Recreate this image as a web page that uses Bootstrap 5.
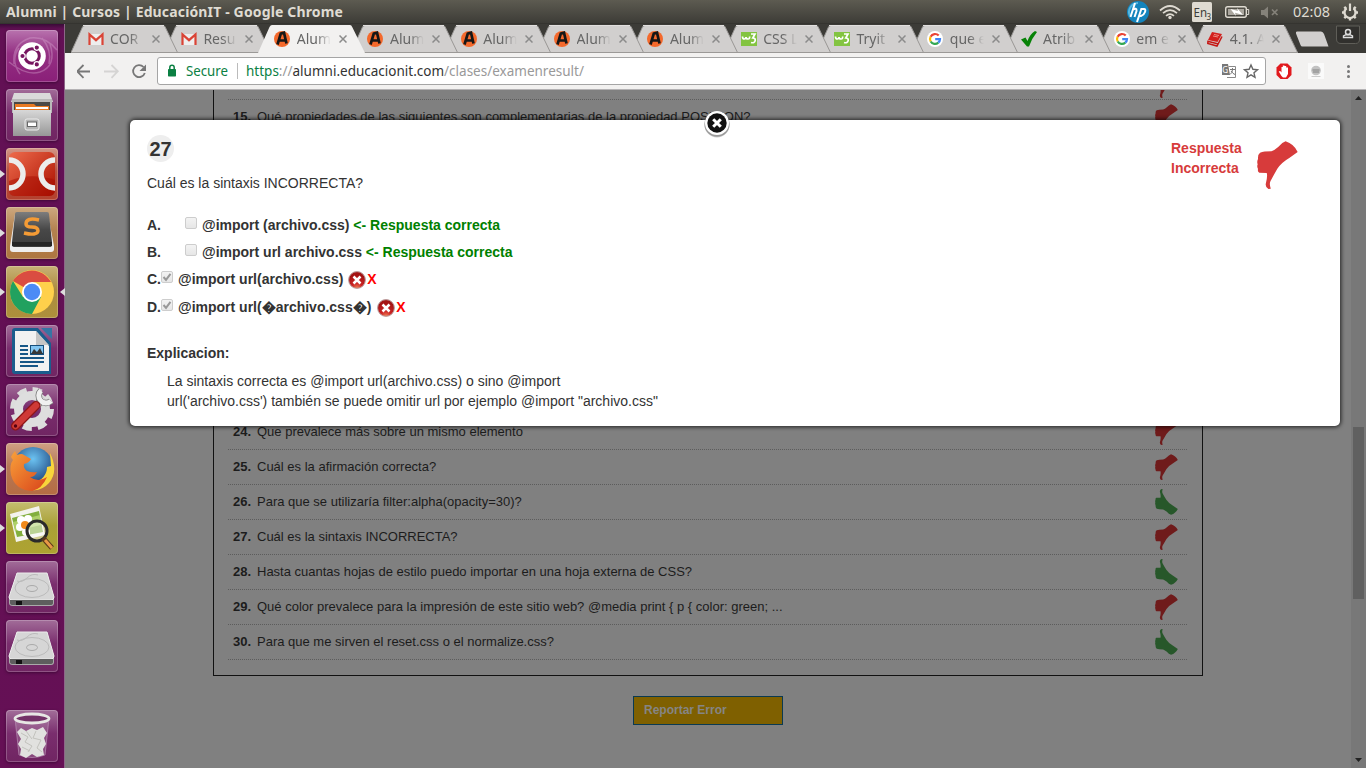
<!DOCTYPE html>
<html lang="es">
<head>
<meta charset="utf-8">
<title>Alumni | Cursos | EducaciónIT</title>
<link href="https://cdn.jsdelivr.net/npm/bootstrap@5.3.0/dist/css/bootstrap.min.css" rel="stylesheet">
<style>
body{width:1366px;height:768px;overflow:hidden;font-family:"Liberation Sans",Arial,sans-serif;color:#333;background:#808080}
svg{display:block;flex:none}
.ui-font{font-family:"Noto Sans","Open Sans",sans-serif}
.top-panel{height:24px;background:linear-gradient(#5d5b51,#3d3c37 96%,#2c2b28);color:#dfdbd2}
.panel-title{font-size:14px;font-weight:700;padding-left:6px;line-height:24px;letter-spacing:.145px}
.tray{position:relative;width:240px;height:24px}
.launcher{width:65px;height:744px;padding:6px 0 0 6px;background:linear-gradient(#3a0b38 0,#621054 5px,#651055 100%);border-right:1px solid #8d6688;gap:7px}
.tile{position:relative;width:52px;height:52px;flex:none;border-radius:4px;background:linear-gradient(#a26d99,#7a2e6e 45%,#702562);box-shadow:inset 0 0 0 1px rgba(255,255,255,.22),0 1px 3px rgba(30,0,30,.5)}
.tile.run::before{content:"";position:absolute;left:-6px;top:22px;border:4px solid transparent;border-left:5px solid #ddd;border-right:0}
.tile.front::after{content:"";position:absolute;right:-7px;top:22px;border:4px solid transparent;border-right:5px solid #ddd;border-left:0}
.tab-strip{height:29px;background:#3c3b37;padding-left:6px;position:relative}
.b-tab{position:relative;width:93.3px;height:29px;flex:none;color:#666}
.tab-shape{position:absolute;left:0;top:0}
.tab-body{position:relative;padding:7px 0 0 16.6px;height:29px}
.tab-text{width:35px;margin:0 -1px 0 6.5px;font-size:14px;line-height:16px;white-space:nowrap;-webkit-mask-image:linear-gradient(90deg,#000 55%,transparent 97%);mask-image:linear-gradient(90deg,#000 55%,transparent 97%)}
.tool-bar{height:37px;background:#f2f1f0;border-bottom:1px solid #b4b2b4;padding:4px 0 0 12px}
.omni{width:1109px;height:28px;border:1px solid #a5a5a5;border-radius:3px;background:#fff;font-size:14px;line-height:26px}
.page{position:relative;height:678px;background:#808080;overflow:hidden}
.results{width:990px;height:606px;margin-left:148px;margin-top:-20px;border:1px solid #111;padding:0 15px 0 14px;font-size:13px;color:#1c1c1c}
.q-row{height:35px;border-bottom:1px dotted #5c5c5c;padding:0 9px 0 5px}
.q-row b{width:24px}
.q-gap{height:280px}
.report{width:150px;height:29px;margin:20px 0 0 568px;background:#7f6000;border:1px solid #0a3a52;color:#858585;font-size:12px;font-weight:700;line-height:27px;padding-left:10px}
.scroll-bar{position:absolute;right:0;top:0;width:15px;height:678px;background:#787878}
.thumb{width:11px;height:172px;background:#606060}
.dialog-box{position:absolute;left:65px;top:30px;width:1210px;height:306px;background:#fff;border-radius:5px;box-shadow:0 0 4px 1px rgba(0,0,0,.75);padding:15px 17px;font-size:14px;line-height:20px}
.close-dot{position:absolute;left:573px;top:-11px}
.num{width:27px;height:27px;border-radius:50%;background:#eee;font-size:20px;font-weight:700;line-height:28px}
.verdict{color:#d73b3b;font-weight:700;padding:3px 25px 0 0;gap:15px}
.verdict span{width:71px}
.opts{font-weight:700;margin-top:22px}
.opt{height:27px}
.fake-check{width:12px;height:12px;border:1px solid #cdcdcd;border-radius:2px;background:linear-gradient(#f3f3f3,#e6e6e6);margin:2px 5px 0 0}
.ok-note{color:#008000}
.bad-note{color:#f00}
</style>
</head>
<body>
<svg width="0" height="0" class="position-absolute">
<defs>
<linearGradient id="gr" x1="0" y1="0" x2="0" y2="1"><stop offset="0" stop-color="#d8d8d8"/><stop offset="1" stop-color="#979797"/></linearGradient>
<linearGradient id="dk" x1="0" y1="0" x2="0" y2="1"><stop offset="0" stop-color="#7d7d7d"/><stop offset=".5" stop-color="#484848"/><stop offset="1" stop-color="#3c3c3c"/></linearGradient>
<linearGradient id="rd" x1="0" y1="0" x2="1" y2="1"><stop offset="0" stop-color="#ee6b4c"/><stop offset="1" stop-color="#a90f00"/></linearGradient>
<linearGradient id="ff" x1="0" y1="0" x2="1" y2="1"><stop offset="0" stop-color="#f9a13a"/><stop offset="1" stop-color="#d8431a"/></linearGradient>
<radialGradient id="ball" cx=".5" cy=".3" r=".7"><stop offset="0" stop-color="#6cc3f2"/><stop offset="1" stop-color="#14356f"/></radialGradient>
<radialGradient id="err" cx=".5" cy="1" r=".8"><stop offset="0" stop-color="#f08458"/><stop offset=".4" stop-color="#cc2525"/><stop offset="1" stop-color="#a31414"/></radialGradient>
<symbol id="hand" viewBox="0 0 122 144" preserveAspectRatio="none"><path d="M85 1Q110 9 121 33L96 51Q72 65 60 84Q46 109 40 121Q36 129 41 143L34 144Q25 140 26 129Q32 107 29 96L7 95Q1 92 3 84Q-1 77 2 70Q-1 62 3 54Q2 40 9 35Q20 31 43 31Q53 27 63 18Q73 5 85 1Z"/></symbol>
<symbol id="tabg" viewBox="0 0 108 29"><path d="M0 28.5L11.5 3Q12.500 1.500 14 1.500H92Q93.500 1.500 94.200 3L106.500 28.500" fill="#d1cfce" stroke="#999795"/><path d="M12 1.500H93" stroke="#e1dfde"/><path d="M0 28.500H107" stroke="#9b9997"/></symbol>
<symbol id="taba" viewBox="0 0 108 29"><path d="M0 29L11.500 3Q12.500 1 14 1H92Q93.500 1 94.200 3L107 29" fill="#f2f1f0"/></symbol>
<symbol id="x" viewBox="0 0 8 8"><path d="M.5.5L7.500 7.500M7.500.5L.5 7.500" stroke="#8b8b8b" stroke-width="1.500"/></symbol>
<symbol id="gm" viewBox="0 0 16 16"><path d="M2 3h12v11H2z" fill="#eee"/><path d="M1.500 14V3.500L8 9.200L14.500 3.500V14" fill="none" stroke="#da4436" stroke-width="2.200"/></symbol>
<symbol id="al" viewBox="0 0 16 16"><circle cx="8" cy="8" r="8" fill="#f4692c"/><path d="M3.500 13.500L6.800 2.700L10 1.700L12.500 12.500M5 9.500H11" fill="none" stroke="#161616" stroke-width="2.700"/></symbol>
<symbol id="w3" viewBox="0 0 16 16"><path d="M0 1h16v14H0z" fill="#83c441"/><path d="M1.500 5.500Q1.500 8 3.300 8Q5 8 5 6Q5 8 7 8Q9 8 8.500 5.500M10 3H14L11.800 7Q14.500 7 14.200 9.500Q13.500 12.500 10 11.500" fill="none" stroke="#fff" stroke-width="1.700"/></symbol>
<symbol id="go" viewBox="0 0 16 16"><circle cx="8" cy="8" r="8" fill="#fff"/><g fill="none" stroke-width="2.200"><path d="M11.700 4.600A5 5 0 0 0 3.600 5.700" stroke="#ea4335"/><path d="M3.600 5.700A5 5 0 0 0 3.700 10.500" stroke="#fbbc05"/><path d="M3.700 10.500A5 5 0 0 0 11.300 11.700" stroke="#34a853"/><path d="M11.300 11.700A5 5 0 0 0 13 8.100H8.200" stroke="#4285f4"/></g></symbol>
<symbol id="tick" viewBox="0 0 16 16"><path d="M0 8.500L4.500 6.500L6.500 10Q9 3 14 0L16 1Q11 7 8 15.500H6Z" fill="#078207"/></symbol>
<symbol id="book" viewBox="0 0 16 16"><path d="M5 1L15 3L10.500 11L1 9Z" fill="#d3201d"/><path d="M1 9.500L.8 12.500L10 15L15 5.500M1.500 10.500L10.500 12.800" fill="none" stroke="#c51815" stroke-width="1.500"/><path d="M6 5L11 6M7 3.500L12 4.500" stroke="#ee8b82"/></symbol>
<symbol id="disk" viewBox="0 0 52 52"><path d="M11 12H41L48 36V42Q48 45 45 45H7Q3 45 3 42V36Z" fill="#aaa"/><path d="M11 12H41L48 36Q48 39 45 39H6Q3 39 3 36Z" fill="#d6d6d6" stroke="#ececec"/><path d="M4 39H47V42Q47 44 44 44H7Q4 44 4 42Z" fill="#5e5e5e"/><path d="M10 40h6v4h-6z" fill="#111"/><ellipse cx="26" cy="27" rx="17" ry="9.500" fill="none" stroke="#bbb"/><ellipse cx="26" cy="27.500" rx="5.500" ry="3" fill="#d6d6d6" stroke="#aaa"/><path d="M11 20Q16 22 21 17T32 14" fill="none" stroke="#bbb"/></symbol>
<symbol id="bad" viewBox="0 0 18 18"><circle cx="9" cy="9" r="8.400" fill="url(#err)" stroke="#b9a0a0"/><path d="M5.500 5.500L12.500 12.500M12.500 5.500L5.500 12.500" stroke="#fff" stroke-width="2.500"/></symbol>
</defs>
</svg>

<header class="top-panel ui-font d-flex justify-content-between">
  <div class="panel-title">Alumni | Cursos | EducaciónIT - Google Chrome</div>
  <svg class="tray" viewBox="0 0 240 24">
    <circle cx="12" cy="12" r="11" fill="#1484bd"/><path d="M12 3a9 9 0 0 0-8 13" fill="none" stroke="#55b6df" stroke-width="2"/>
    <path d="M9 3L4.500 17M6.500 10Q11 7 10.500 11L8.500 17M15.500 8.500L11 22M14.500 9H18Q20 9 19 12T15 16H13" fill="none" stroke="#fff" stroke-width="2"/>
    <g fill="none" stroke="#dfdbd2" stroke-width="1.700"><path d="M34 10.500Q44 1.500 54 10.500M37 13.200Q44 7 51 13.200M40 15.800Q44 12.300 48 15.800"/></g><circle cx="44" cy="17.500" r="1.700" fill="#dfdbd2"/>
    <rect x="66" y="2" width="20" height="20" rx="1.500" fill="#dfdbd2"/><text x="67.500" y="17" font-size="13" textLength="13.500" lengthAdjust="spacingAndGlyphs" fill="#3c3b37">En</text><text x="80.500" y="20" font-size="8" fill="#3c3b37">3</text>
    <rect x="99.700" y="6.700" width="20.600" height="10.600" rx="2" fill="none" stroke="#dfdbd2" stroke-width="1.400"/><path d="M102 9h16v6h-16z" fill="#aaa69e"/><path d="M121 9.500h1.700v5H121" fill="none" stroke="#dfdbd2"/><path d="M104.500 9L112 11L111 8L117 15L109 12.700L110 16Z" fill="#fff"/>
    <path d="M135 10H138L142 6.500V18.500L138 15H135Z" fill="#85827a"/><path d="M146 9.500L151.500 15M151.500 9.500L146 15" stroke="#85827a" stroke-width="1.700"/>
    <text x="167" y="17" font-size="14" textLength="37" lengthAdjust="spacingAndGlyphs" fill="#dfdbd2">02:08</text>
    <g stroke="#dfdbd2" fill="none"><path d="M220.500 8.300A5.500 5.500 0 1 0 227.500 8.300" stroke-width="2.300"/><path d="M224 3.500V11" stroke-width="2.200"/><path d="M216 12.500h3M229 12.500h3M218.300 6.800l2 2M229.700 6.800l-2 2M218.300 18.200l2-2M229.700 18.200l-2-2M224 17.500v3" stroke-width="2.400"/></g>
  </svg>
</header>

<div class="d-flex">
<nav class="launcher d-flex flex-column">
  <div class="tile" style="background:linear-gradient(#b873ae,#943083 45%,#8a1f78)"><svg width="52" height="52" viewBox="0 0 52 52"><g fill="none" stroke="#d8a4d0" stroke-opacity=".4" stroke-width="1.500"><path d="M8 34Q6 14 24 8Q40 6 51 20M44 14Q51 36 34 42Q20 46 3 32M14 44Q4 30 13 18M36 8Q46 20 43 34"/></g><circle cx="26" cy="26" r="13.800" fill="#fff"/><circle cx="26" cy="26" r="7.300" fill="none" stroke="#76155f" stroke-width="3"/><g stroke="#fff" stroke-width="1.200" fill="#76155f"><circle cx="16.500" cy="26" r="2.700"/><circle cx="30.800" cy="17.600" r="2.700"/><circle cx="30.800" cy="34.400" r="2.700"/></g></svg></div>
  <div class="tile"><svg width="52" height="52" viewBox="0 0 52 52"><path d="M8 4H44L47 13H5Z" fill="#dadada"/><path d="M6 10H46V24H6Z" fill="#b9b9b9"/><path d="M8 13H44V24H8Z" fill="#4a4a48"/><path d="M9 15H28L30 17H43V24H9Z" fill="#e97a22"/><path d="M10 18H42V20H10Z" fill="#fff"/><path d="M7 21H45V47H7Z" fill="url(#gr)"/><rect x="19" y="30" width="14" height="11" rx="2" fill="#b4b4b4" stroke="#ededed"/><rect x="21.500" y="33" width="9" height="4.500" fill="#fff" stroke="#666"/></svg></div>
  <div class="tile run" style="background:linear-gradient(#d39787,#b64f40 45%,#b4412e)"><svg width="52" height="52" viewBox="0 0 52 52"><rect x="3" y="4" width="46" height="44" rx="6" fill="url(#rd)"/><path d="M3 33Q24 24 49 32V42Q49 48 43 48H9Q3 48 3 42Z" fill="#a50c00" opacity=".5"/><g fill="none" stroke="#ececec" stroke-width="5.500"><path d="M3 12A14 14 0 0 1 3 40M49 12A14 14 0 0 0 49 40"/></g></svg></div>
  <div class="tile run" style="background:linear-gradient(#cda980,#b3814f 45%,#ad7640)"><svg width="52" height="52" viewBox="0 0 52 52"><path d="M9 7H42L48 39V42Q48 45 45 45H7Q4 45 4 42V39Z" fill="#eee"/><path d="M11 5H41Q43 5 43 7L46 35V38Q46 40 43 40H9Q6 40 6 38V35L9 7Q9 5 11 5Z" fill="url(#dk)"/><path d="M6 35H46V39H6Z" fill="#252525"/><path d="M33 13Q20 10 20 17Q20 20 26 20T32 24Q31 29 18 26" fill="none" stroke="#f49b35" stroke-width="3.500"/></svg></div>
  <div class="tile run front" style="background:linear-gradient(#c8b276,#ac8c41 45%,#ad903b)"><svg width="52" height="52" viewBox="0 0 52 52"><circle cx="26" cy="26" r="22" fill="#ffd04b"/><path d="M26 26L7 15A22 22 0 0 1 45 16H26Z" fill="#da4d41"/><path d="M7 15A22 22 0 0 0 26 48L35 31L26 26L17 31Z" fill="#21a15f"/><circle cx="26" cy="26" r="10" fill="#fff"/><circle cx="26" cy="26" r="8.200" fill="#4c8bf5"/></svg></div>
  <div class="tile"><svg width="52" height="52" viewBox="0 0 52 52"><path d="M9 3H32L45 18V49H9Q6 49 6 46V6Q6 3 9 3Z" fill="#1b5d8d"/><path d="M9 6H30L43 21V46H9Z" fill="#f2f2f2"/><path d="M30 6V20H43Z" fill="#c5c5c5"/><path d="M35 3H46V14Z" fill="#3675a3"/><g stroke="#175787" stroke-width="2"><path d="M14 21h8M14 25h8M14 29h8M14 33h24M14 37h24M14 41h18"/></g><path d="M24 20H38V30H24Z" fill="#174f7c"/><path d="M25 21H37V28H25Z" fill="#83c6f2"/><path d="M25 29L28 24L31 27L34 23L37 29Z" fill="#373737"/></svg></div>
  <div class="tile"><svg width="52" height="52" viewBox="0 0 52 52"><circle cx="26" cy="25" r="19" fill="none" stroke="#dcdcdc" stroke-width="6" stroke-dasharray="9 5.920"/><circle cx="26" cy="25" r="13.500" fill="none" stroke="#dedede" stroke-width="9"/><path d="M28 24L38 14" stroke="#888" stroke-width="8"/><path d="M28 24L38 14" stroke="#eee" stroke-width="6"/><path d="M35 6.500A7 7 0 1 0 45 17" fill="none" stroke="#777" stroke-width="6.500"/><path d="M35 6.500A7 7 0 1 0 45 17" fill="none" stroke="#f0f0f0" stroke-width="5"/><path d="M9.500 42L30 21.500" stroke="#8e1515" stroke-width="9" stroke-linecap="round"/><path d="M9.500 42L30 21.500" stroke="#cf3a36" stroke-width="6.500" stroke-linecap="round"/><circle cx="9.500" cy="42" r="1.700" fill="#501"/></svg></div>
  <div class="tile run" style="background:linear-gradient(#d0a084,#b67957 45%,#b56c43)"><svg width="52" height="52" viewBox="0 0 52 52"><circle cx="27" cy="24" r="20" fill="url(#ball)"/><path d="M44 10Q53 28 43 40Q34 50 21 46L28 40Q41 35 41 24L45 23Z" fill="#f8d53b"/><path d="M5 14Q7 10 9 8L11 12Q16 10 18 12L25 16Q23 20 18 21Q17 25 21 28Q26 30 31 29Q29 34 24 34Q32 40 41 34Q36 46 26 48Q9 47 5 32Q3 22 7 17Z" fill="url(#ff)"/></svg></div>
  <div class="tile run" style="background:linear-gradient(#c4bd70,#a9a136 45%,#aea331)"><svg width="52" height="52" viewBox="0 0 52 52"><path d="M4 12L33 4L39 33L10 40Z" fill="#f3f3ed"/><path d="M6 16L33 9L37 30L11 35Z" fill="#82af3e"/><path d="M7 20L34 13L35 23L9 29Z" fill="#aed06a"/><g fill="#fff"><circle cx="15" cy="18" r="4"/><circle cx="22" cy="17" r="4"/><circle cx="14" cy="25" r="4"/><circle cx="20" cy="30" r="4"/></g><circle cx="19" cy="23" r="4" fill="#f08a1c"/><circle cx="31" cy="29" r="10" fill="#fff" fill-opacity=".45" stroke="#2a2a2a" stroke-width="3"/><path d="M37 36L46 46" stroke="#593a1a" stroke-width="5"/><path d="M39 38L46 46" stroke="#e89946" stroke-width="3"/></svg></div>
  <div class="tile"><svg width="52" height="52"><use href="#disk"/></svg></div>
  <div class="tile"><svg width="52" height="52"><use href="#disk"/></svg></div>
  <div class="tile" style="margin-top:31px"><svg width="52" height="52" viewBox="0 0 52 52"><path d="M9 8L13 45Q26 50 39 45L43 8" fill="#fff" fill-opacity=".15" stroke="#b990b4" stroke-width=".7"/><path d="M11 22L15 18L20 21L26 18L31 20L37 17L41 23L38 28L40 34L37 39L38 45L31 47L26 44L20 48L14 45L15 39L12 34L15 29Z" fill="#e1e1df"/><path d="M15 23L22 27L19 32L26 36L22 42M30 21L27 28L35 30L31 38L36 42M20 21L26 29M16 37L24 41" fill="none" stroke="#c2c2bd"/><ellipse cx="26" cy="8.500" rx="17" ry="4.500" fill="#733267" stroke="#e7e7e4" stroke-width="2.800"/></svg></div>
</nav>

<main class="flex-grow-1">
  <div class="tab-strip ui-font d-flex">
    <div class="b-tab" style="z-index:12"><svg class="tab-shape" width="108" height="29"><use href="#tabg"/></svg><div class="tab-body d-flex"><svg width="16" height="16"><use href="#gm"/></svg><div class="tab-text">COR</div><svg class="mt-1 ms-2" width="8" height="8"><use href="#x"/></svg></div></div>
    <div class="b-tab" style="z-index:11"><svg class="tab-shape" width="108" height="29"><use href="#tabg"/></svg><div class="tab-body d-flex"><svg width="16" height="16"><use href="#gm"/></svg><div class="tab-text">Resu</div><svg class="mt-1 ms-2" width="8" height="8"><use href="#x"/></svg></div></div>
    <div class="b-tab" style="z-index:20"><svg class="tab-shape" width="108" height="29"><use href="#taba"/></svg><div class="tab-body d-flex"><svg width="16" height="16"><use href="#al"/></svg><div class="tab-text">Alum</div><svg class="mt-1 ms-2" width="8" height="8"><use href="#x"/></svg></div></div>
    <div class="b-tab" style="z-index:10"><svg class="tab-shape" width="108" height="29"><use href="#tabg"/></svg><div class="tab-body d-flex"><svg width="16" height="16"><use href="#al"/></svg><div class="tab-text">Alum</div><svg class="mt-1 ms-2" width="8" height="8"><use href="#x"/></svg></div></div>
    <div class="b-tab" style="z-index:9"><svg class="tab-shape" width="108" height="29"><use href="#tabg"/></svg><div class="tab-body d-flex"><svg width="16" height="16"><use href="#al"/></svg><div class="tab-text">Alum</div><svg class="mt-1 ms-2" width="8" height="8"><use href="#x"/></svg></div></div>
    <div class="b-tab" style="z-index:8"><svg class="tab-shape" width="108" height="29"><use href="#tabg"/></svg><div class="tab-body d-flex"><svg width="16" height="16"><use href="#al"/></svg><div class="tab-text">Alum</div><svg class="mt-1 ms-2" width="8" height="8"><use href="#x"/></svg></div></div>
    <div class="b-tab" style="z-index:7"><svg class="tab-shape" width="108" height="29"><use href="#tabg"/></svg><div class="tab-body d-flex"><svg width="16" height="16"><use href="#al"/></svg><div class="tab-text">Alum</div><svg class="mt-1 ms-2" width="8" height="8"><use href="#x"/></svg></div></div>
    <div class="b-tab" style="z-index:6"><svg class="tab-shape" width="108" height="29"><use href="#tabg"/></svg><div class="tab-body d-flex"><svg width="16" height="16"><use href="#w3"/></svg><div class="tab-text">CSS L</div><svg class="mt-1 ms-2" width="8" height="8"><use href="#x"/></svg></div></div>
    <div class="b-tab" style="z-index:5"><svg class="tab-shape" width="108" height="29"><use href="#tabg"/></svg><div class="tab-body d-flex"><svg width="16" height="16"><use href="#w3"/></svg><div class="tab-text">Tryit</div><svg class="mt-1 ms-2" width="8" height="8"><use href="#x"/></svg></div></div>
    <div class="b-tab" style="z-index:4"><svg class="tab-shape" width="108" height="29"><use href="#tabg"/></svg><div class="tab-body d-flex"><svg width="16" height="16"><use href="#go"/></svg><div class="tab-text">que e</div><svg class="mt-1 ms-2" width="8" height="8"><use href="#x"/></svg></div></div>
    <div class="b-tab" style="z-index:3"><svg class="tab-shape" width="108" height="29"><use href="#tabg"/></svg><div class="tab-body d-flex"><svg width="16" height="16"><use href="#tick"/></svg><div class="tab-text">Atrib</div><svg class="mt-1 ms-2" width="8" height="8"><use href="#x"/></svg></div></div>
    <div class="b-tab" style="z-index:2"><svg class="tab-shape" width="108" height="29"><use href="#tabg"/></svg><div class="tab-body d-flex"><svg width="16" height="16"><use href="#go"/></svg><div class="tab-text">em e</div><svg class="mt-1 ms-2" width="8" height="8"><use href="#x"/></svg></div></div>
    <div class="b-tab" style="z-index:1"><svg class="tab-shape" width="108" height="29"><use href="#tabg"/></svg><div class="tab-body d-flex"><svg width="16" height="16"><use href="#book"/></svg><div class="tab-text">4.1. A</div><svg class="mt-1 ms-2" width="8" height="8"><use href="#x"/></svg></div></div>
    <svg width="82" height="29" viewBox="1284 24 82 29"><path d="M1299 31.500H1321Q1323 31.500 1324 34L1328.500 46.500H1302.500Q1301 46.500 1300.500 45L1296 33.500Q1295.500 31.500 1297 31.500Z" fill="#d1cfce"/><path d="M1336.500 26V39Q1336.500 43.500 1341 43.500H1355.500Q1359.500 43.500 1359.500 39V26Z" fill="#31302d" stroke="#5f5e58"/><circle cx="1348" cy="32" r="2.500" fill="none" stroke="#ddd" stroke-width="1.500"/><path d="M1343.500 37.500V36L1346 34.700H1350L1352.500 36V37.500Z" fill="none" stroke="#ddd" stroke-width="1.400"/></svg>
  </div>

  <div class="tool-bar ui-font d-flex">
    <svg width="80" height="28" viewBox="77 57 80 28"><g fill="none" stroke-width="1.800"><path d="M90 71.500H77.500M83.500 65L77.200 71.300L83.500 77.800" stroke="#777"/><path d="M104 71.500H117M111.500 65L117.800 71.300L111.500 77.800" stroke="#d5d4d3"/><path d="M143.500 67A6 6 0 1 0 144.800 73" stroke="#777"/></g><path d="M146 64.500V71H139.500Z" fill="#777"/></svg>
    <div class="omni d-flex">
      <svg width="28" height="26" viewBox="158 58 28 26"><rect x="168" y="69" width="8" height="7.500" rx=".7" fill="#0b8043"/><path d="M169.800 69V67.500A2.200 2.200 0 0 1 174.200 67.500V69" fill="none" stroke="#0b8043" stroke-width="1.500"/></svg>
      <svg width="1030" height="26" viewBox="186 58 1030 26" font-size="14"><text x="186" y="76" textLength="42" lengthAdjust="spacingAndGlyphs" fill="#0b8043">Secure</text><path d="M237.500 63V79" stroke="#bbb"/><text x="246" y="76" textLength="338" lengthAdjust="spacingAndGlyphs" fill="#999"><tspan fill="#0b8043">https</tspan>://<tspan fill="#333">alumni.educacionit.com</tspan>/clases/examenresult/</text></svg>
      <svg width="49" height="26" viewBox="1216 58 49 26"><path d="M1222 64H1228L1230 75H1222Z" fill="#777"/><path d="M1228.500 66.500H1235.500V77.500H1227" fill="none" stroke="#888"/><text x="1222.300" y="73" font-size="8" fill="#fff">G</text><path d="M1230 69.500H1235M1232.500 68V69.500Q1232.500 73 1230 74.500M1231 71Q1233 74 1235 74.500" stroke="#777" fill="none"/><path d="M1251 65L1252.900 69.300L1257.500 69.700L1254 72.800L1255 77.300L1251 74.900L1247 77.300L1248 72.800L1244.500 69.700L1249.100 69.300Z" fill="none" stroke="#666" stroke-width="1.400"/></svg>
    </div>
    <svg width="100" height="28" viewBox="1266 57 100 28"><path d="M1280.500 63.500H1287.500L1291.500 67.500V75L1287.500 79H1280.500L1276.500 75V67.500Z" fill="#e1191d"/><path d="M1281.500 76L1278.700 71.500L1280.200 71L1281.500 72.500V67H1282.800V65.500H1284.500V66H1286.200V67.500H1288V74L1286 77.500H1283Z" fill="#fff"/><path d="M1308 63h16v16h-16z" fill="#fafafa"/><circle cx="1316" cy="70.500" r="4.800" fill="#c2c2c2"/><path d="M1312.500 70h7M1313 72h6" stroke="#999" stroke-width="1.300"/><path d="M1311.500 76.500h9" stroke="#ccc"/><g fill="#777"><circle cx="1348.500" cy="66.500" r="1.500"/><circle cx="1348.500" cy="71.500" r="1.500"/><circle cx="1348.500" cy="76.500" r="1.500"/></g></svg>
  </div>

  <div class="page">
    <div class="results">
      <div class="q-row d-flex align-items-center" style="height:29px"><svg class="ms-auto" width="23" height="26" fill="#6f1b1b"><use href="#hand"/></svg></div>
      <div class="q-row d-flex align-items-center"><b>15.</b><span>Qué propiedades de las siguientes son complementarias de la propiedad POSITION?</span><svg class="ms-auto" width="23" height="26" fill="#6f1b1b"><use href="#hand"/></svg></div>
      <div class="q-gap"></div>
      <div class="q-row d-flex align-items-center"><b>24.</b><span>Que prevalece más sobre un mismo elemento</span><svg class="ms-auto" width="23" height="26" fill="#6f1b1b"><use href="#hand"/></svg></div>
      <div class="q-row d-flex align-items-center"><b>25.</b><span>Cuál es la afirmación correcta?</span><svg class="ms-auto" width="23" height="26" fill="#6f1b1b"><use href="#hand"/></svg></div>
      <div class="q-row d-flex align-items-center"><b>26.</b><span>Para que se utilizaría filter:alpha(opacity=30)?</span><svg class="ms-auto" width="23" height="26" fill="#27572a"><use href="#hand" transform="matrix(1 0 0 -1 0 26)"/></svg></div>
      <div class="q-row d-flex align-items-center"><b>27.</b><span>Cuál es la sintaxis INCORRECTA?</span><svg class="ms-auto" width="23" height="26" fill="#6f1b1b"><use href="#hand"/></svg></div>
      <div class="q-row d-flex align-items-center"><b>28.</b><span>Hasta cuantas hojas de estilo puedo importar en una hoja externa de CSS?</span><svg class="ms-auto" width="23" height="26" fill="#27572a"><use href="#hand" transform="matrix(1 0 0 -1 0 26)"/></svg></div>
      <div class="q-row d-flex align-items-center"><b>29.</b><span>Qué color prevalece para la impresión de este sitio web? @media print { p { color: green; ...</span><svg class="ms-auto" width="23" height="26" fill="#6f1b1b"><use href="#hand"/></svg></div>
      <div class="q-row d-flex align-items-center"><b>30.</b><span>Para que me sirven el reset.css o el normalize.css?</span><svg class="ms-auto" width="23" height="26" fill="#27572a"><use href="#hand" transform="matrix(1 0 0 -1 0 26)"/></svg></div>
    </div>
    <div class="report">Reportar Error</div>

    <div class="scroll-bar d-flex flex-column align-items-center">
      <svg width="15" height="14"><path d="M4 10H11L7.500 6Z" fill="#222"/></svg>
      <div class="thumb" style="margin-top:323px"></div>
      <svg class="mt-auto" width="15" height="14"><path d="M4 4H11L7.500 8Z" fill="#222"/></svg>
    </div>

    <section class="dialog-box">
      <svg class="close-dot" width="28" height="30" viewBox="0 0 28 30"><circle cx="14" cy="16" r="12.500" fill="#000" opacity=".2"/><circle cx="14" cy="15" r="12.700" fill="#000" opacity=".25"/><circle cx="14" cy="14" r="12" fill="#fff"/><circle cx="14" cy="14" r="9.700" fill="#111"/><path d="M10.200 10.200L17.800 17.800M17.800 10.200L10.200 17.800" stroke="#fff" stroke-width="3"/></svg>
      <div class="d-flex justify-content-between">
        <div>
          <div class="num text-center">27</div>
          <div style="margin-top:11px">Cuál es la sintaxis INCORRECTA?</div>
        </div>
        <div class="verdict d-flex"><span>Respuesta Incorrecta</span><svg width="41" height="48" fill="#d73b3b" style="margin-top:3px"><use href="#hand"/></svg></div>
      </div>
      <div class="opts">
        <div class="opt d-flex"><span style="width:38px">A.</span><i class="fake-check"></i><span>@import (archivo.css)&nbsp;</span><span class="ok-note">&lt;- Respuesta correcta</span></div>
        <div class="opt d-flex"><span style="width:38px">B.</span><i class="fake-check"></i><span>@import url archivo.css&nbsp;</span><span class="ok-note">&lt;- Respuesta correcta</span></div>
        <div class="opt d-flex" style="height:28px"><span style="width:14px">C.</span><svg class="fake-check" viewBox="0 0 10 10"><path d="M1.500 5L4 7.800L8.500 1.800" fill="none" stroke="#999" stroke-width="2"/></svg><span>@import url(archivo.css)&nbsp;</span><svg width="18" height="18" style="margin:2px 1px 0 1px"><use href="#bad"/></svg><span class="bad-note">X</span></div>
        <div class="opt d-flex"><span style="width:14px">D.</span><svg class="fake-check" viewBox="0 0 10 10"><path d="M1.500 5L4 7.800L8.500 1.800" fill="none" stroke="#999" stroke-width="2"/></svg><span>@import url(&#xFFFD;archivo.css&#xFFFD;)&nbsp;</span><svg width="18" height="18" style="margin:2px 1px 0 2px"><use href="#bad"/></svg><span class="bad-note">X</span></div>
      </div>
      <div class="fw-bold" style="margin-top:19px">Explicacion:</div>
      <div style="margin:8px 0 0 20px">La sintaxis correcta es @import url(archivo.css) o sino @import<br>url('archivo.css') también se puede omitir url por ejemplo @import "archivo.css"</div>
    </section>
  </div>
</main>
</div>
<script src="https://cdn.jsdelivr.net/npm/bootstrap@5.3.0/dist/js/bootstrap.bundle.min.js"></script>
</body>
</html>
